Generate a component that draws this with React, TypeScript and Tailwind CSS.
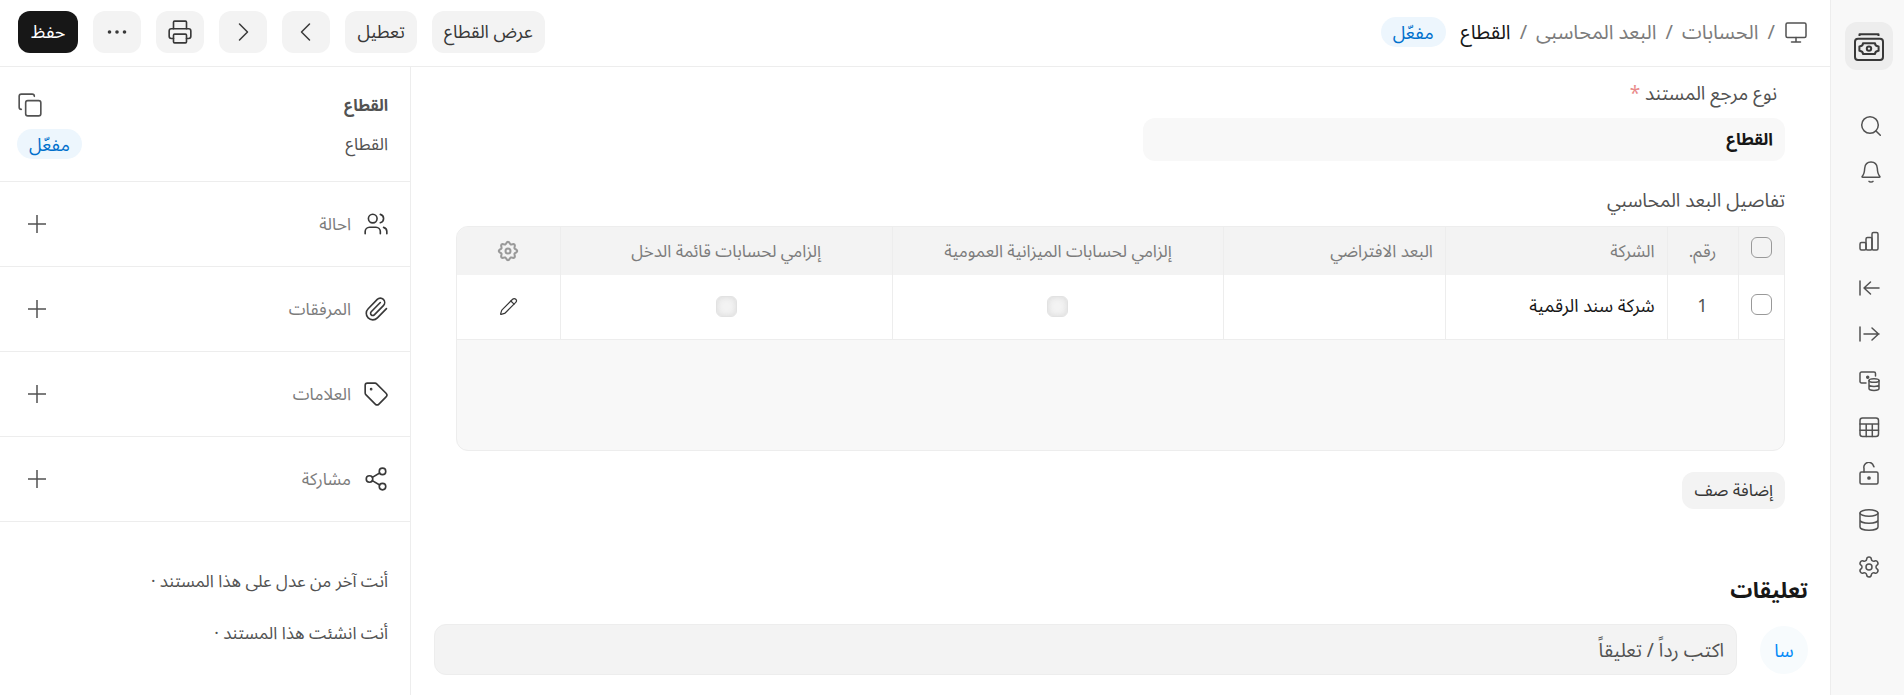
import { ReactNode } from "react";
import { Copy, Paperclip, Pencil, Printer, Settings, Share2, Tag, Users } from "lucide-react";

const Icon = ({ children, size = 24 }: { children: ReactNode; size?: number }) => (
  <svg
    width={size}
    height={size}
    viewBox="0 0 24 24"
    fill="none"
    stroke="currentColor"
    strokeWidth="1.5"
    strokeLinecap="round"
    strokeLinejoin="round"
    aria-hidden="true"
  >
    {children}
  </svg>
);

const railItems = [
  {
    label: "لوحة القيادة",
    icon: (
      <Icon>
        <rect x="3" y="13.5" width="6" height="7.5" rx="1.5" />
        <rect x="9" y="8.5" width="6" height="12.5" rx="1.5" />
        <rect x="15" y="3.5" width="6" height="17.5" rx="1.5" />
      </Icon>
    ),
  },
  {
    label: "المدفوعات",
    icon: (
      <Icon>
        <path d="M3 5v14M22 12H7M13.5 6L7 12l6.5 6" />
      </Icon>
    ),
  },
  {
    label: "المقبوضات",
    icon: (
      <Icon>
        <path d="M3 5v14M7 12h15M15 6l6.5 6-6.5 6" />
      </Icon>
    ),
  },
  {
    label: "النقدية",
    icon: (
      <Icon>
        <path d="M9 14H4.500A1.500 1.500 0 0 1 3 12.500v-8A1.500 1.500 0 0 1 4.500 3h12.500a1.500 1.500 0 0 1 1.500 1.500V7" />
        <circle cx="10.700" cy="8.300" r="1" fill="currentColor" />
        <ellipse cx="17" cy="11.500" rx="5" ry="1.800" />
        <path d="M12 11.500v8c0 1 2.200 1.900 5 1.900s5-.9 5-1.900v-8M12 15.500c0 1 2.200 1.900 5 1.900s5-.9 5-1.900" />
      </Icon>
    ),
  },
  {
    label: "التقارير",
    icon: (
      <Icon>
        <rect x="3" y="3" width="18.500" height="18.500" rx="2.500" />
        <path d="M3 9h18.500M3 15.200h18.500M9.200 9v12.500M15.300 9v12.500" />
      </Icon>
    ),
  },
  {
    label: "الصلاحيات",
    icon: (
      <Icon>
        <rect x="3" y="10" width="18" height="12" rx="1.500" />
        <path d="M7 10V6.500a4.800 4.800 0 0 1 9.500-2.500l.5.800" />
        <circle cx="12" cy="16" r="1.100" fill="currentColor" />
      </Icon>
    ),
  },
  {
    label: "البيانات",
    icon: (
      <Icon>
        <ellipse cx="12" cy="5" rx="9" ry="3.200" />
        <path d="M3 5v14c0 1.800 4 3.200 9 3.200s9-1.400 9-3.200V5M3 12c0 1.800 4 3.200 9 3.200s9-1.400 9-3.200" />
      </Icon>
    ),
  },
  { label: "الإعدادات", icon: <Settings size={24} strokeWidth={1.5} /> },
];

const sections = [
  { label: "احالة", icon: <Users size={26} strokeWidth={1.5} /> },
  { label: "المرفقات", icon: <Paperclip size={26} strokeWidth={1.5} /> },
  { label: "العلامات", icon: <Tag size={26} strokeWidth={1.5} /> },
  { label: "مشاركة", icon: <Share2 size={26} strokeWidth={1.5} /> },
];

// outline of the eight-tooth gear in the grid header
const gearPath =
  Array.from({ length: 64 }, (_, i) => {
    const a = (i / 64) * Math.PI * 2;
    const r = 8.1 + 1.1 * Math.cos(a * 8);
    return `${i ? "L" : "M"}${(12 + r * Math.sin(a)).toFixed(2)} ${(12 - r * Math.cos(a)).toFixed(2)}`;
  }).join("") + "Z";

const Badge = () => (
  <span className="flex h-[30px] items-center rounded-full bg-[#edf6fd] px-3 text-lg text-[#0070cc]">
    مفعّل
  </span>
);

const Rail = () => (
  <aside className="flex w-[74px] shrink-0 flex-col items-center border-l border-[#ededed] bg-[#f8f8f8] pt-[22px] pl-0.5 text-[#525252]">
    <button
      aria-label="المحاسبة"
      className="flex size-12 items-center justify-center rounded-xl bg-[#ededed] text-[#383838]"
    >
      <svg
        width="32"
        height="32"
        viewBox="0 0 32 32"
        fill="none"
        stroke="currentColor"
        strokeWidth="2"
        strokeLinejoin="round"
        aria-hidden="true"
      >
        <path d="M6.500 6V4.300h19V6" />
        <rect x="2" y="8.700" width="28" height="21.300" rx="3" />
        <path d="M10 13.200h12c0 1.900 1.300 3 3.600 3.200v4.400c-2.300.2-3.600 1.300-3.600 3.200H10c0-1.900-1.300-3-3.600-3.200v-4.400c2.300-.2 3.600-1.300 3.600-3.200z" />
        <circle cx="16" cy="18.600" r="2.200" />
      </svg>
    </button>
    <div className="mt-11 flex flex-col gap-[22px]">
      <button aria-label="بحث">
        <Icon>
          <circle cx="13" cy="11" r="8.300" />
          <path d="M19 17l4.300 4.300" />
        </Icon>
      </button>
      <button aria-label="الإشعارات">
        <Icon>
          <path d="M14 2c-3.900 0-6 2.800-6.300 6.200C7.500 12 7 14.500 5.300 16.200c-.5.600-.3 1.100.4 1.100h16.600c.7 0 .9-.5.4-1.100-1.700-1.700-2.200-4.200-2.400-8C20 4.800 17.900 2 14 2zM12 21.300c.6 1 3.400 1 4 0" />
        </Icon>
      </button>
    </div>
    <nav className="mt-[45px] flex h-[350px] flex-col justify-between">
      {railItems.map((item) => (
        <a key={item.label} href="#" aria-label={item.label}>
          {item.icon}
        </a>
      ))}
    </nav>
  </aside>
);

const Header = () => (
  <header className="flex h-[67px] shrink-0 items-center justify-between border-b border-[#ededed] pr-[22px] pb-[13px] pl-[18px] pt-[11px]">
    <nav className="flex items-center gap-[9px] text-xl text-[#7c7c7c]">
      <a href="#" aria-label="الرئيسية" className="text-[#525252]">
        <Icon>
          <rect x="2" y="3" width="20" height="14.500" rx="1.500" />
          <path d="M12 17.500V22M7.500 22h9" />
        </Icon>
      </a>
      <span>/</span>
      <a href="#">الحسابات</a>
      <span>/</span>
      <a href="#">البعد المحاسبى</a>
      <span>/</span>
      <span className="text-[#171717]">القطاع</span>
      <div className="mr-1.5">
        <Badge />
      </div>
    </nav>
    <div className="flex gap-[15px] text-lg text-[#383838]">
      <button className="h-[42px] rounded-xl bg-[#f3f3f3] px-3 pb-0.5">عرض القطاع</button>
      <button className="h-[42px] rounded-xl bg-[#f3f3f3] px-3 pb-0.5">تعطيل</button>
      <button aria-label="السابق" className="flex h-[42px] w-12 items-center justify-center rounded-xl bg-[#f3f3f3]">
        <Icon>
          <path d="M15.500 4L7.500 12l8 8" />
        </Icon>
      </button>
      <button aria-label="التالي" className="flex h-[42px] w-12 items-center justify-center rounded-xl bg-[#f3f3f3]">
        <Icon>
          <path d="M8.500 4l8 8-8 8" />
        </Icon>
      </button>
      <button aria-label="طباعة" className="flex h-[42px] w-12 items-center justify-center rounded-xl bg-[#f3f3f3]">
        <Printer size={26} strokeWidth={1.5} />
      </button>
      <button aria-label="المزيد" className="flex h-[42px] w-12 items-center justify-center rounded-xl bg-[#f3f3f3]">
        <Icon>
          <g fill="currentColor" stroke="none">
            <circle cx="4.500" cy="12" r="1.800" />
            <circle cx="12" cy="12" r="1.800" />
            <circle cx="19.500" cy="12" r="1.800" />
          </g>
        </Icon>
      </button>
      <button className="h-[42px] rounded-xl bg-[#171717] px-[13px] pb-0.5 text-white">حفظ</button>
    </div>
  </header>
);

const Grid = () => (
  <div className="min-h-[225px] overflow-hidden rounded-xl border border-[#ededed] bg-[#f8f8f8]">
    <table className="w-full table-fixed text-[17px]">
      <colgroup>
        <col className="w-[46px]" />
        <col className="w-[71px]" />
        <col className="w-[16.7%]" />
        <col className="w-[16.7%]" />
        <col className="w-[25%]" />
        <col className="w-[25%]" />
        <col />
      </colgroup>
      <thead>
        <tr className="h-12 bg-[#f3f3f3] text-[#7c7c7c] *:border-l *:border-[#ededed] *:p-0 *:font-normal *:last:border-l-0">
          <th>
            <input
              type="checkbox"
              aria-label="تحديد الكل"
              className="mx-auto mb-2 block size-[21px] appearance-none rounded-md border border-[#999999]"
            />
          </th>
          <th>رقم.</th>
          <th className="text-right">
            <span className="px-3">الشركة</span>
          </th>
          <th className="text-right">
            <span className="px-3">البعد الافتراضي</span>
          </th>
          <th>إلزامي لحسابات الميزانية العمومية</th>
          <th>إلزامي لحسابات قائمة الدخل</th>
          <th>
            <button aria-label="إعداد الأعمدة" className="mx-auto block text-[#999999]">
              <svg width="24" height="24" viewBox="0 0 24 24" fill="none" stroke="currentColor" strokeWidth="2" aria-hidden="true">
                <path d={gearPath} />
                <circle cx="12" cy="12" r="2.500" />
              </svg>
            </button>
          </th>
        </tr>
      </thead>
      <tbody>
        <tr className="h-16 border-b border-[#ededed] bg-white text-lg text-[#171717] *:border-l *:border-[#ededed] *:p-0 *:last:border-l-0">
          <td>
            <input
              type="checkbox"
              aria-label="تحديد الصف 1"
              className="mx-auto mb-1 block size-[21px] appearance-none rounded-md border border-[#999999] bg-white"
            />
          </td>
          <td className="text-center text-[#525252]">
            <span className="block pb-1">1</span>
          </td>
          <td>
            <span className="block px-3 pb-1">شركة سند الرقمية</span>
          </td>
          <td />
          <td>
            <input
              type="checkbox"
              disabled
              aria-label="إلزامي لحسابات الميزانية العمومية"
              className="mx-auto block size-[21px] appearance-none rounded-md border border-[#e2e2e2] bg-[#f3f3f3] shadow-[inset_0_0_6px_#d9d9d9]"
            />
          </td>
          <td>
            <input
              type="checkbox"
              disabled
              aria-label="إلزامي لحسابات قائمة الدخل"
              className="mx-auto block size-[21px] appearance-none rounded-md border border-[#e2e2e2] bg-[#f3f3f3] shadow-[inset_0_0_6px_#d9d9d9]"
            />
          </td>
          <td>
            <button aria-label="تعديل" className="mx-auto block text-[#383838]">
              <Pencil size={19} strokeWidth={1.5} />
            </button>
          </td>
        </tr>
      </tbody>
    </table>
  </div>
);

const Form = () => (
  <main className="flex min-w-0 flex-1 flex-col pr-[22px] pl-[23px] text-[#525252]">
    <div className="pt-3 pr-[23px] pl-[22px]">
      <label htmlFor="reference" className="block px-2 text-[19px] leading-7">
        نوع مرجع المستند <span className="text-[#e98b8b]">*</span>
      </label>
      <input
        id="reference"
        readOnly
        value="القطاع"
        className="mt-[11px] block h-[43px] w-[calc(50%-22px)] rounded-xl bg-[#f8f8f8] px-3 text-[17px] font-bold text-[#171717]"
      />
      <h4 className="mt-[25px] mb-3 text-[19px] leading-7">تفاصيل البعد المحاسبي</h4>
      <Grid />
      <button className="mt-[21px] h-[37px] rounded-xl bg-[#f3f3f3] px-3 pb-0.5 text-[17px] text-[#383838]">
        إضافة صف
      </button>
    </div>
    <h3 className="mt-16 text-[22px] leading-8 font-bold text-[#171717]">تعليقات</h3>
    <div className="mt-[19px] flex items-center gap-[23px]">
      <span className="flex size-12 items-center justify-center rounded-full bg-[#f7fbfd] text-lg text-[#0289f7]">
        سا
      </span>
      <input
        aria-label="تعليق"
        placeholder="اكتب رداً / تعليقاً"
        className="h-[51px] min-w-0 flex-1 rounded-xl border border-[#ededed] bg-[#f3f3f3] px-3 text-[19px] placeholder:text-[#525252]"
      />
    </div>
  </main>
);

const Sidebar = () => (
  <aside className="w-[411px] shrink-0 border-r border-[#ededed] text-[17px] text-[#525252]">
    <div className="flex flex-col gap-[10px] border-b border-[#ededed] pt-6 pr-[22px] pb-[22px] pl-[17px]">
      <div className="flex h-7 items-center justify-between">
        <span className="text-base font-bold">القطاع</span>
        <button aria-label="نسخ">
          <Copy size={26} strokeWidth={1.5} />
        </button>
      </div>
      <div className="flex h-[30px] items-center justify-between">
        <span>القطاع</span>
        <Badge />
      </div>
    </div>
    {sections.map((section) => (
      <div
        key={section.label}
        className="flex h-[85px] items-center justify-between border-b border-[#ededed] pr-[21px] pl-7"
      >
        <div className="flex items-center gap-3 text-[#7c7c7c]">
          <span className="text-[#383838]">{section.icon}</span>
          {section.label}
        </div>
        <button aria-label={`إضافة ${section.label}`}>
          <svg width="18" height="18" viewBox="0 0 18 18" stroke="currentColor" strokeWidth="1.5" aria-hidden="true">
            <path d="M9 0v18M0 9h18" />
          </svg>
        </button>
      </div>
    ))}
    <ul className="flex flex-col gap-6 pt-[45px] pr-[22px] leading-7">
      <li>أنت آخر من عدل على هذا المستند ·</li>
      <li>أنت انشئت هذا المستند ·</li>
    </ul>
  </aside>
);

export default function App() {
  return (
    <div
      dir="rtl"
      className="flex min-h-screen bg-white font-['Noto_Sans','Noto_Sans_Arabic','DejaVu_Sans_Condensed','DejaVu_Sans',sans-serif]"
    >
      <Rail />
      <div className="flex min-w-0 flex-1 flex-col">
        <Header />
        <div className="flex flex-1">
          <Form />
          <Sidebar />
        </div>
      </div>
    </div>
  );
}
